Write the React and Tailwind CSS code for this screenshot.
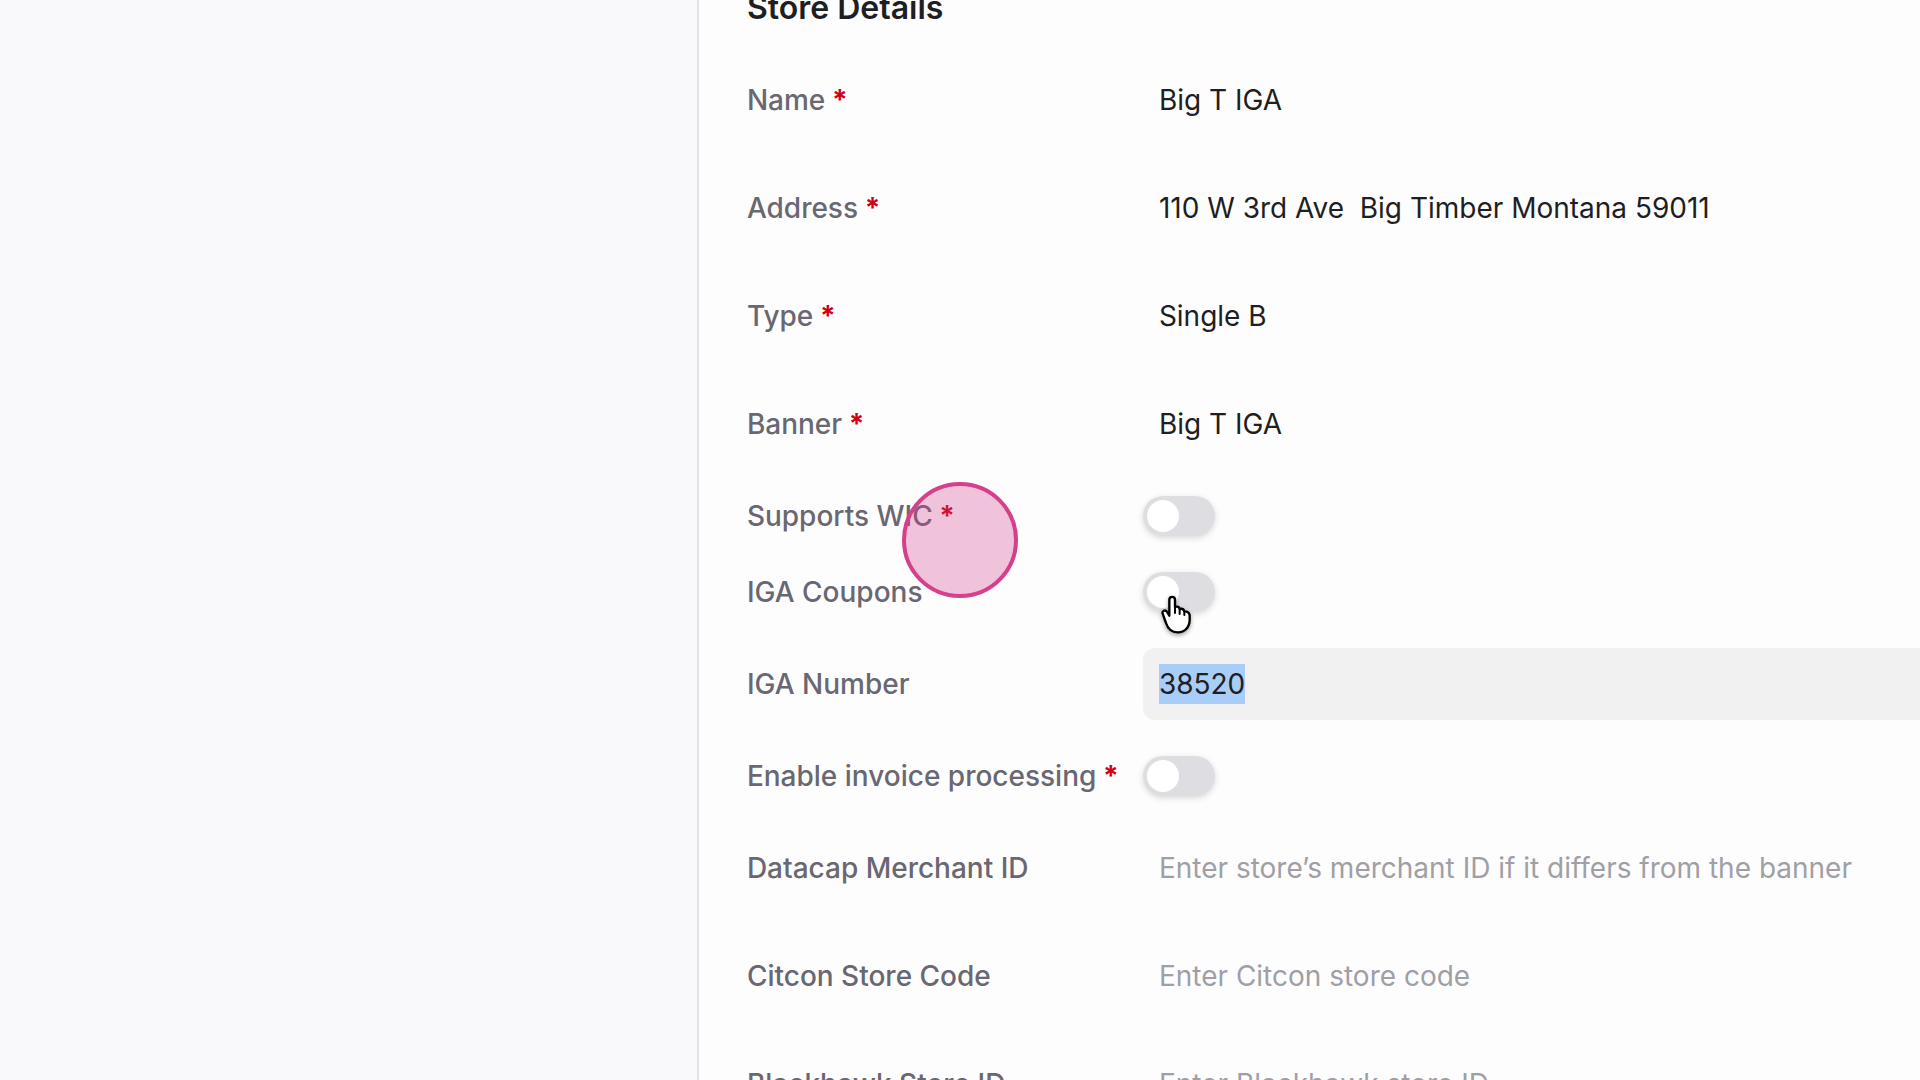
import React, { useEffect, useRef, useState } from 'react';

const fields = [
    { id: 'name', label: 'Name', required: true, value: 'Big T IGA' },
    { id: 'address', label: 'Address', required: true, value: '110 W 3rd Ave  Big Timber Montana 59011' },
    { id: 'type', label: 'Type', required: true, value: 'Single B' },
    { id: 'banner', label: 'Banner', required: true, value: 'Big T IGA' },
    { id: 'wic', label: 'Supports WIC', required: true, toggle: true },
    { id: 'coupons', label: 'IGA Coupons', toggle: true },
    { id: 'igaNumber', label: 'IGA Number', value: '38520', selected: true },
    { id: 'invoice', label: 'Enable invoice processing', required: true, toggle: true },
    { id: 'datacap', label: 'Datacap Merchant ID', placeholder: 'Enter store’s merchant ID if it differs from the banner' },
    { id: 'citcon', label: 'Citcon Store Code', placeholder: 'Enter Citcon store code' },
    { id: 'blackhawk', label: 'Blackhawk Store ID', placeholder: 'Enter Blackhawk store ID' },
];

function Toggle({ id }) {
    const [on, setOn] = useState(false);

    return (
        <input
            id={id}
            type="checkbox"
            role="switch"
            checked={on}
            onChange={() => setOn(!on)}
            className="h-10 w-18 shrink-0 appearance-none rounded-full bg-[#dedde1] p-1 shadow-[0_2px_6px_rgba(0,0,0,0.15)] before:block before:size-8 before:rounded-full before:bg-white checked:bg-blue-500 checked:before:translate-x-8"
        />
    );
}

function TextField({ field }) {
    const [value, setValue] = useState(field.value || '');
    const ref = useRef(null);

    useEffect(() => {
        if (field.selected) {
            ref.current.focus({ preventScroll: true });
            ref.current.select();
        }
    }, [field.selected]);

    return (
        <div className="relative flex min-w-0 flex-1 rounded-xl focus-within:bg-[#f1f1f1]">
            {/* full line height highlight behind the selected value */}
            {field.selected && value === field.value && (
                <span aria-hidden="true" className="absolute top-4 left-4 h-10 w-[86px] bg-[#a8cdf7]" />
            )}
            <input
                ref={ref}
                id={field.id}
                type="text"
                value={value}
                placeholder={field.placeholder}
                onChange={(e) => setValue(e.target.value)}
                className="relative h-18 w-full bg-transparent px-4 text-[28px] leading-10 text-[#1f1e22] outline-none placeholder:text-[#a09fa6] selection:bg-[#a8cdf7] selection:text-[#1f1e22]"
            />
        </div>
    );
}

function Row({ field }) {
    return (
        <div className="flex items-center">
            <label htmlFor={field.id} className="w-99 shrink-0 text-[28px] leading-10 font-medium text-[#696771]">
                {field.label}
                {field.required && <span className="font-bold text-[#d4000f]"> *</span>}
            </label>
            {field.toggle ? <Toggle id={field.id} /> : <TextField field={field} />}
        </div>
    );
}

function HandCursor() {
    return (
        <svg
            viewBox="0 0 90 120"
            className="pointer-events-none absolute top-[595px] left-[1161px] h-10 w-[30px] overflow-visible drop-shadow-[0_2px_2px_rgba(0,0,0,0.35)]"
        >
            <path
                d="M25 62 V14 a8.500 8.500 0 0 1 17 0 V36 q12 -4 14 6 q11 -3 14 7 q13 -1 16 11 V74 c0 22 -14 38 -36 38 c-20 0 -30 -12 -35 -28 L5 56 c-3 -9 9 -14 14 -4 Z"
                fill="#fff"
                stroke="#000"
                strokeWidth="7"
                strokeLinejoin="round"
            />
            <path d="M42 34 V54 M56 42 V57 M70 48 V60" stroke="#000" strokeWidth="6" strokeLinecap="round" />
        </svg>
    );
}

export default function App() {
    return (
        <div className="relative flex h-screen overflow-hidden bg-[#fdfdfd] font-['Inter',sans-serif]">
            <aside className="w-[36.4%] shrink-0 border-r-2 border-[#e2e1e6] bg-[#f9f9fc]" />
            <main className="-mr-4 min-w-0 flex-1 pl-12">
                <h2 className="-mt-3 text-[32px] leading-10 font-semibold text-[#1f1e22]">Store Details</h2>
                <form className="flex flex-col gap-9 pt-9">
                    {fields.map((field) => (
                        <Row key={field.id} field={field} />
                    ))}
                </form>
            </main>
            {/* click ripple and pointer sit on top of the form */}
            <div className="pointer-events-none absolute top-[482px] left-[902px] size-[116px] rounded-full border-4 border-[#d53f8c] bg-[#d53f8c]/30" />
            <HandCursor />
        </div>
    );
}
